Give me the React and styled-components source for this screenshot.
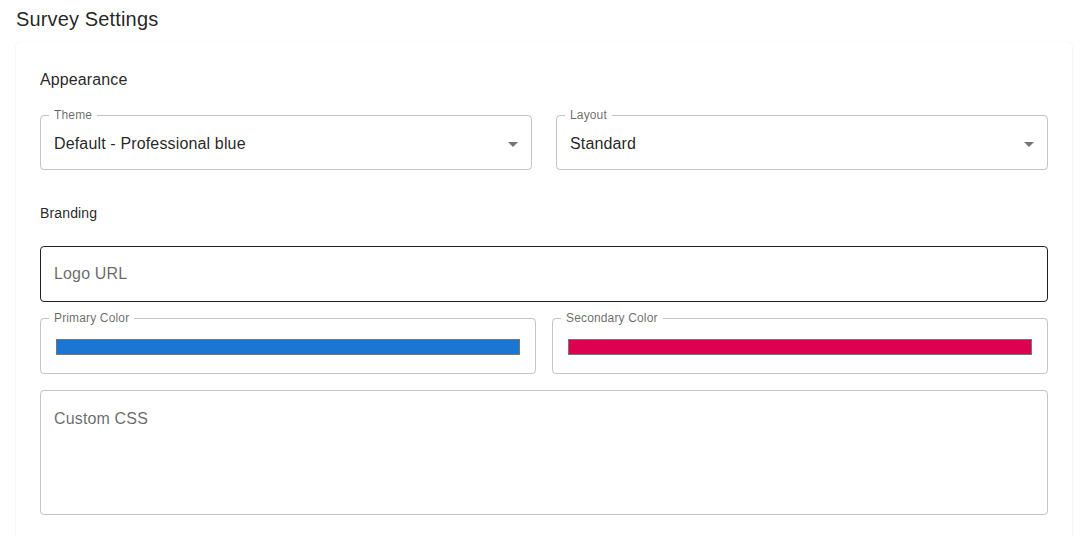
import React from "react";
import styled, { createGlobalStyle } from "styled-components";

const Global = createGlobalStyle`
  html, body { margin: 0; padding: 0; background: #ffffff; }
  body {
    font-family: "Liberation Sans", Arial, Helvetica, sans-serif;
    color: rgba(0, 0, 0, 0.87);
  }
  * { box-sizing: border-box; }
`;

const Page = styled.div`
  padding: 3px 2px 0 16px;
`;

const Title = styled.h1`
  margin: 0 0 7px;
  font-size: 20px;
  font-weight: 400;
  line-height: 32px;
  letter-spacing: 0.15px;
`;

const Card = styled.section`
  background: #ffffff;
  border-radius: 4px;
  box-shadow: 0 1px 3px rgba(0, 0, 0, 0.07), 0 0 1px rgba(0, 0, 0, 0.1);
  padding: 25px 24px 24px;
  display: flex;
  flex-direction: column;
`;

const SectionTitle = styled.h2`
  margin: 0 0 16px;
  font-size: 16px;
  font-weight: 400;
  line-height: 25.6px;
  letter-spacing: 0.12px;
`;

const SubTitle = styled.h3`
  margin: 33px 0 23px;
  font-size: 14px;
  font-weight: 400;
  line-height: 20px;
  letter-spacing: 0.15px;
`;

const Row = styled.div`
  display: grid;
  grid-template-columns: 1fr 1fr;
  gap: ${(p) => p.$gap}px;
  margin-top: ${(p) => p.$mt || 0}px;
`;

const Fieldset = styled.fieldset`
  margin: 0;
  padding: 0;
  min-width: 0;
  border: 1px solid rgba(0, 0, 0, 0.23);
  border-radius: 4px;
`;

const Legend = styled.legend`
  margin-left: 8px;
  padding: 0 5px;
  font-size: 12px;
  line-height: 13px;
  letter-spacing: 0.15px;
  color: rgba(0, 0, 0, 0.6);
`;

const FieldContent = styled.div`
  display: flex;
  align-items: center;
  height: ${(p) => p.$height || 48}px;
  padding: 0 6px 2px 13px;
  margin-top: -1px;
`;

const Value = styled.span`
  flex: 1;
  font-size: 16px;
  line-height: 23px;
  letter-spacing: 0.15px;
  color: rgba(0, 0, 0, 0.87);
`;

const Arrow = styled.svg`
  width: 24px;
  height: 24px;
  flex: none;
  fill: rgba(0, 0, 0, 0.54);
`;

const Swatch = styled.div`
  flex: 1;
  height: 16px;
  margin: 0 9px 2px 2px;
  border: 1px solid #767676;
  background: ${(p) => p.$color};
`;

const Box = styled.div`
  border: 1px solid ${(p) => (p.$active ? "rgba(0, 0, 0, 0.87)" : "rgba(0, 0, 0, 0.23)")};
  border-radius: 4px;
  height: ${(p) => p.$height}px;
  padding: 15.5px 13px;
  margin-top: ${(p) => p.$mt || 0}px;
`;

const Placeholder = styled.span`
  display: block;
  font-size: 16px;
  line-height: 23px;
  letter-spacing: 0.15px;
  color: rgba(0, 0, 0, 0.6);
`;

function SelectField({ label, value }) {
  return (
    <Fieldset>
      <Legend>{label}</Legend>
      <FieldContent>
        <Value>{value}</Value>
        <Arrow viewBox="0 0 24 24" aria-hidden="true">
          <path d="M7 10l5 5 5-5z" />
        </Arrow>
      </FieldContent>
    </Fieldset>
  );
}

function ColorField({ label, color }) {
  return (
    <Fieldset>
      <Legend>{label}</Legend>
      <FieldContent $height={49}>
        <Swatch $color={color} />
      </FieldContent>
    </Fieldset>
  );
}

export default function App() {
  return (
    <>
      <Global />
      <Page>
        <Title>Survey Settings</Title>
        <Card>
          <SectionTitle>Appearance</SectionTitle>
          <Row $gap={24}>
            <SelectField label="Theme" value="Default - Professional blue" />
            <SelectField label="Layout" value="Standard" />
          </Row>
          <SubTitle>Branding</SubTitle>
          <Box $active $height={56}>
            <Placeholder>Logo URL</Placeholder>
          </Box>
          <Row $gap={16} $mt={10.5}>
            <ColorField label="Primary Color" color="#1976d2" />
            <ColorField label="Secondary Color" color="#dc004e" />
          </Row>
          <Box $height={125} $mt={16}>
            <Placeholder>Custom CSS</Placeholder>
          </Box>
        </Card>
      </Page>
    </>
  );
}
